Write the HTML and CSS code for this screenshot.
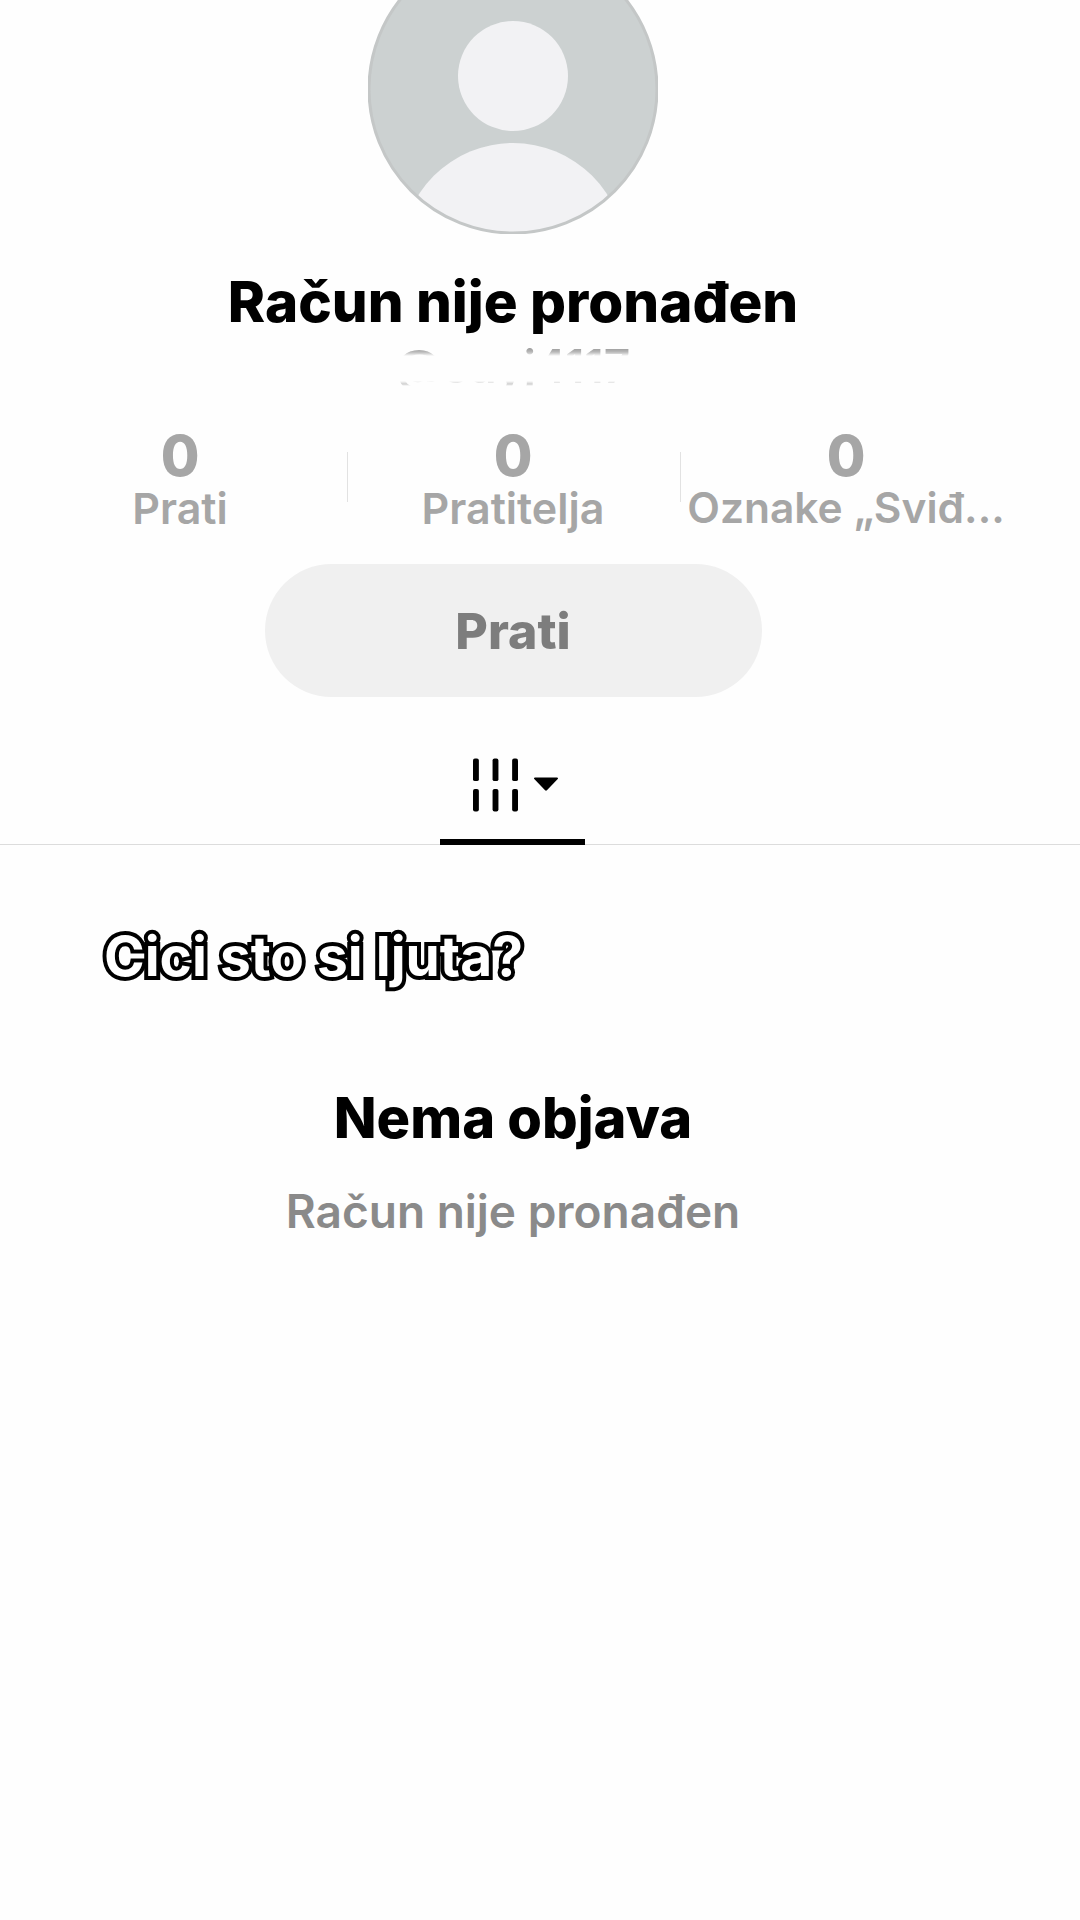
FILE: index.html
```html
<!DOCTYPE html>
<html lang="hr">
<head>
<meta charset="utf-8">
<title>Račun nije pronađen</title>
<link rel="stylesheet" href="styles.css">
</head>
<body>
<main class="page">
  <section class="profile">
    <div class="avatar">
      <svg viewBox="0 0 290 290" width="290" height="290" aria-hidden="true">
        <defs><clipPath id="disc"><circle cx="145" cy="145" r="144"/></clipPath></defs>
        <circle cx="145" cy="145" r="144" fill="#ccd1d1"/>
        <circle cx="145" cy="132" r="55" fill="#f2f2f4"/>
        <circle cx="145" cy="311" r="112" fill="#f2f2f4" clip-path="url(#disc)"/>
        <circle cx="145" cy="145" r="144" fill="none" stroke="#c4c7c7" stroke-width="3"/>
      </svg>
    </div>
    <h1 class="title">Račun nije pronađen</h1>
    <div class="handle"><span class="handle-text">@cuyj4117</span></div>
    <div class="stats">
      <div class="stat"><strong class="stat-num">0</strong><span class="stat-label">Prati</span></div>
      <div class="stat stat-divided"><strong class="stat-num">0</strong><span class="stat-label">Pratitelja</span></div>
      <div class="stat stat-divided"><strong class="stat-num">0</strong><span class="stat-label">Oznake „Sviđ...</span></div>
    </div>
    <button class="follow" type="button">Prati</button>
    <div class="tabs">
      <div class="tab">
        <svg class="grid-icon" viewBox="0 0 46 54" width="45" height="54" aria-hidden="true">
          <g fill="#000">
            <rect x="0" y="0" width="6" height="23" rx="2"/><rect x="20" y="0" width="6" height="23" rx="2"/><rect x="40" y="0" width="6" height="23" rx="2"/>
            <rect x="0" y="31" width="6" height="23" rx="2"/><rect x="20" y="31" width="6" height="23" rx="2"/><rect x="40" y="31" width="6" height="23" rx="2"/>
          </g>
        </svg>
        <svg class="caret" viewBox="0 0 26 15" width="24" height="14" aria-hidden="true"><path d="M1 0.5h24a1 1 0 0 1 .7 1.7L14 14.2a1.4 1.4 0 0 1-2 0L.3 2.2A1 1 0 0 1 1 .5z" fill="#000"/></svg>
      </div>
    </div>
    <div class="empty">
      <h2 class="empty-title">Nema objava</h2>
      <p class="empty-text">Račun nije pronađen</p>
    </div>
  </section>
  <div class="caption">Cici sto si ljuta?</div>
</main>
</body>
</html>
```
FILE: styles.css
```css
* { box-sizing: border-box; }
html, body { margin: 0; height: 1920px; overflow: hidden; background: #fefefe; }
body { font-family: Inter, "Liberation Sans", sans-serif; }
.page { position: relative; width: 1080px; height: 1920px; overflow: hidden; }
.profile { width: 1026px; display: flex; flex-direction: column; align-items: center; }
.avatar { width: 290px; height: 290px; margin-top: -56px; flex: none; }
.avatar svg { display: block; }
.title { margin: 35px 0 0; font-size: 56.5px; line-height: 66px; font-weight: 800; color: #000; white-space: nowrap; }
.handle { height: 40px; margin-top: 11px; width: 100%; display: flex; justify-content: center; overflow: hidden; }
.handle-text { font-size: 46px; line-height: 40px; font-weight: 600; color: #8a8a8a;
  -webkit-mask-image: linear-gradient(to bottom, #000 0, rgba(0,0,0,.6) 6px, transparent 10px, transparent 35px, rgba(0,0,0,.4) 38px, transparent 40px);
  mask-image: linear-gradient(to bottom, #000 0, rgba(0,0,0,.6) 6px, transparent 10px, transparent 35px, rgba(0,0,0,.4) 38px, transparent 40px); }
.stats { display: grid; grid-template-columns: repeat(3, 333px); margin-top: 40px; }
.stat { position: relative; display: flex; flex-direction: column; align-items: center; color: #a6a6a6; }
.stat-divided::before { content: ""; position: absolute; left: 0; top: 26px; width: 1px; height: 50px; background: #e2e2e2; }
.stat-num { font-size: 56px; line-height: 60px; font-weight: 800; }
.stat-label { font-size: 43px; line-height: 44px; font-weight: 600; white-space: nowrap; }
.stat-divided:last-child .stat-label { font-size: 42.5px; }
.follow { width: 497px; height: 133px; margin-top: 34px; border: 0; border-radius: 67px; background: #f0f0f0; color: #7d7d7d; font: 800 50px/1 Inter, "Liberation Sans", sans-serif; }
.tabs { width: 1080px; align-self: flex-start; height: 148px; border-bottom: 1px solid #dcdcdc; position: relative; }
.tab { position: absolute; left: 440px; bottom: -1px; width: 145px; height: 148px; border-bottom: 6px solid #000; display: flex; align-items: flex-start; padding: 61px 0 0 33px; }
.grid-icon { flex: none; }
.caret { flex: none; margin: 19px 0 0 16px; }
.empty { margin-top: 241px; display: flex; flex-direction: column; align-items: center; }
.empty-title { margin: 0; font-size: 56px; line-height: 64px; font-weight: 800; color: #000; }
.empty-text { margin: 33px 0 0; font-size: 46px; line-height: 56px; font-weight: 600; color: #8a8a8a; }
.caption { position: absolute; left: 104px; top: 922px; font-size: 55px; line-height: 68px; font-weight: 700; color: #fff; white-space: nowrap; -webkit-text-stroke: 8px #000; paint-order: stroke fill; }
```
